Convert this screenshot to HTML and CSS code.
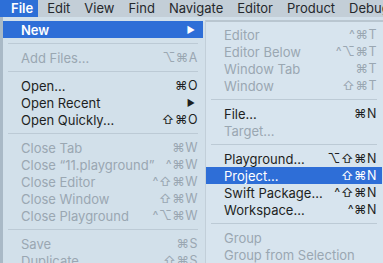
FILE: index.html
```html
<!DOCTYPE html>
<html lang="en">
<head>
  <meta charset="UTF-8" />
  <title>Xcode File Menu</title>
  <link rel="stylesheet" href="styles.css">
</head>
<body>
  <nav class="menubar">
    <span class="menubar-item active">File</span>
    <span class="menubar-item">Edit</span>
    <span class="menubar-item">View</span>
    <span class="menubar-item">Find</span>
    <span class="menubar-item">Navigate</span>
    <span class="menubar-item">Editor</span>
    <span class="menubar-item">Product</span>
    <span class="menubar-item">Debug</span>
  </nav>

  <div class="menus">
    <div class="menu main-menu">
      <div class="item selected"><span>New</span><span class="arrow">&#9654;</span></div>
      <div class="sep"></div>
      <div class="item disabled"><span>Add Files...</span><span class="key">⌥⌘A</span></div>
      <div class="sep"></div>
      <div class="item"><span>Open...</span><span class="key">⌘O</span></div>
      <div class="item"><span>Open Recent</span><span class="arrow">&#9654;</span></div>
      <div class="item"><span>Open Quickly...</span><span class="key">⇧⌘O</span></div>
      <div class="sep"></div>
      <div class="item disabled"><span>Close Tab</span><span class="key">⌘W</span></div>
      <div class="item disabled"><span>Close “11.playground”</span><span class="key">^⌘W</span></div>
      <div class="item disabled"><span>Close Editor</span><span class="key">^⇧⌘W</span></div>
      <div class="item disabled"><span>Close Window</span><span class="key">⇧⌘W</span></div>
      <div class="item disabled"><span>Close Playground</span><span class="key">^⌥⌘W</span></div>
      <div class="sep"></div>
      <div class="item disabled"><span>Save</span><span class="key">⌘S</span></div>
      <div class="item disabled"><span>Duplicate...</span><span class="key">⇧⌘S</span></div>
    </div>

    <div class="menu sub-menu">
      <div class="item disabled"><span>Editor</span><span class="key">^⌘T</span></div>
      <div class="item disabled"><span>Editor Below</span><span class="key">^⌥⌘T</span></div>
      <div class="item disabled"><span>Window Tab</span><span class="key">⌘T</span></div>
      <div class="item disabled"><span>Window</span><span class="key">⇧⌘T</span></div>
      <div class="sep"></div>
      <div class="item"><span>File...</span><span class="key">⌘N</span></div>
      <div class="item disabled"><span>Target...</span><span class="key"></span></div>
      <div class="sep"></div>
      <div class="item"><span>Playground...</span><span class="key">⌥⇧⌘N</span></div>
      <div class="item selected"><span>Project...</span><span class="key">⇧⌘N</span></div>
      <div class="item"><span>Swift Package...</span><span class="key">^⇧⌘N</span></div>
      <div class="item"><span>Workspace...</span><span class="key">^⌘N</span></div>
      <div class="sep"></div>
      <div class="item disabled"><span>Group</span><span class="key"></span></div>
      <div class="item disabled"><span>Group from Selection</span><span class="key"></span></div>
    </div>
  </div>
</body>
</html>
```

FILE: styles.css
```css
body {
  margin: 0;
  padding: 0;
  width: 383px;
  height: 263px;
  overflow: hidden;
  font-family: 'Inter', 'DejaVu Sans', sans-serif;
  background-color: #d3e0ea;
  color: #1d1f22;
}

.menubar {
  display: flex;
  gap: 14px;
  height: 17px;
  align-items: center;
  background-color: #c3ced7;
  font-size: 13px;
  white-space: nowrap;
  overflow: hidden;
}

.menubar-item {
  line-height: 17px;
  color: #25282c;
}

.menubar-item.active {
  padding: 0 5px 0 11px;
  margin-right: -5px;
  background-color: #2d6fd7;
  color: #fff;
  font-weight: 600;
}

.menus {
  display: flex;
  align-items: flex-start;
}

.menu {
  font-size: 13px;
  box-sizing: border-box;
}

.main-menu {
  width: 205px;
  height: 246px;
  padding: 4px 2px 0 0;
  border-left: 3px solid #a9b9c6;
  background-color: #d2e0ea;
}

.sub-menu {
  width: 178px;
  height: 243px;
  margin-top: 3px;
  padding: 4px 1px 0 0;
  border-top: 2px solid #b9c6d0;
  border-left: 1px solid #c2cfd9;
  background-color: #d7e4ee;
}

.item {
  display: flex;
  justify-content: space-between;
  align-items: center;
  height: 17px;
  padding: 0 5px 0 18px;
  white-space: nowrap;
}

.item.disabled {
  color: #9aa7b2;
}

.item.selected {
  background-color: #2e6ed7;
  color: #fff;
}

.main-menu .item.selected {
  font-weight: 600;
}

.key {
  font-size: 12.5px;
  letter-spacing: 0.5px;
}

.arrow {
  font-size: 9px;
  margin-right: 3px;
}

.sep {
  height: 1px;
  margin: 5px;
  background-color: #bccad5;
}
```
